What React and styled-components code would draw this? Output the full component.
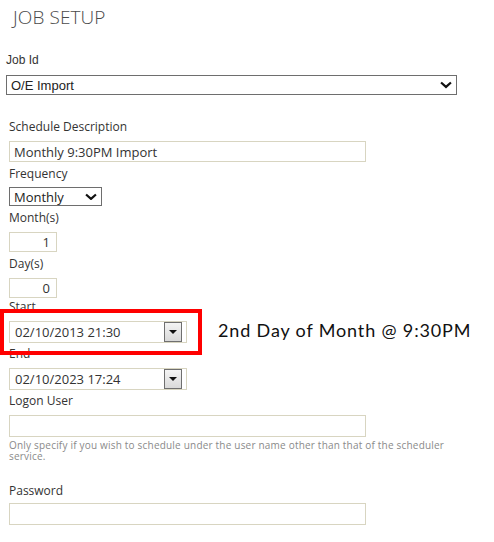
import styled, { createGlobalStyle } from "styled-components";

const GlobalStyle = createGlobalStyle`
  html, body {
    margin: 0;
    padding: 0;
    background: #ffffff;
  }
  body {
    font-family: "Open Sans", "Liberation Sans", sans-serif;
    color: #333333;
  }
`;

const Page = styled.div`
  position: relative;
  width: 494px;
  height: 542px;
  padding: 0 0 0 9px;
  box-sizing: border-box;
  overflow: hidden;
`;

const Title = styled.h1`
  margin: 0;
  padding: 5px 0 0 4px;
  font-family: "Open Sans", sans-serif;
  font-weight: 300;
  font-size: 19px;
  line-height: 24px;
  color: #4a4a4a;
  letter-spacing: 0.1px;
`;

const Field = styled.div`
  display: flex;
  flex-direction: column;
  align-items: flex-start;
  margin-top: ${(p) => p.$top || 0}px;
  margin-left: ${(p) => p.$left || 0}px;
`;

const Label = styled.label`
  display: block;
  font-family: ${(p) =>
    p.$arial ? '"Liberation Sans", Arial, sans-serif' : '"Open Sans", sans-serif'};
  font-size: 12px;
  line-height: 18px;
  color: #333333;
  margin-bottom: ${(p) => p.$gap ?? 5}px;
`;

const TextBox = styled.div`
  box-sizing: border-box;
  width: ${(p) => p.$width}px;
  height: ${(p) => p.$height || 22}px;
  border: 1px solid #d8d5c1;
  background: #ffffff;
  display: flex;
  align-items: center;
  justify-content: ${(p) => (p.$right ? "flex-end" : "flex-start")};
  padding: 0 ${(p) => (p.$right ? 6 : 4)}px 0 4px;
  font-family: "Open Sans", sans-serif;
  font-size: 13px;
  color: #333333;
  white-space: nowrap;
`;

const SelectBox = styled.div`
  box-sizing: border-box;
  width: ${(p) => p.$width}px;
  height: ${(p) => p.$height}px;
  border: 1px solid #6e6e6e;
  background: #ffffff;
  display: flex;
  align-items: center;
  justify-content: space-between;
  padding: 0 4px 0 4px;
  font-family: ${(p) =>
    p.$arial ? '"Liberation Sans", Arial, sans-serif' : '"Open Sans", sans-serif'};
  font-size: 13px;
  color: #222222;
`;

const DateBox = styled(TextBox)`
  justify-content: space-between;
  padding: 0 4px 0 5px;
`;

const DropButton = styled.span`
  box-sizing: border-box;
  width: 18px;
  height: 20px;
  border: 1px solid #6f6f6f;
  background: linear-gradient(#f4f4f4, #d9d9d9);
  display: flex;
  align-items: center;
  justify-content: center;
`;

const Triangle = styled.span`
  width: 0;
  height: 0;
  border-left: 4px solid transparent;
  border-right: 4px solid transparent;
  border-top: 4px solid #111111;
`;

const Help = styled.p`
  margin: 3px 0 0;
  width: 460px;
  font-family: "Open Sans", sans-serif;
  font-size: 10px;
  line-height: 11px;
  letter-spacing: 0.2px;
  color: #8a8a8a;
`;

const Highlight = styled.div`
  position: absolute;
  left: 0;
  top: 309px;
  width: 202px;
  height: 46px;
  box-sizing: border-box;
  border: 4px solid #ff0000;
  pointer-events: none;
`;

const Note = styled.div`
  position: absolute;
  left: 218px;
  top: 318px;
  font-family: "Lato", "Liberation Sans", sans-serif;
  font-size: 18px;
  line-height: 24px;
  letter-spacing: 0.85px;
  color: #111111;
  white-space: nowrap;
`;

const Chevron = ({ size = 12 }) => (
  <svg width={size} height={size * 0.66} viewBox="0 0 12 8">
    <path d="M1 1.5 L6 6 L11 1.5" fill="none" stroke="#111" strokeWidth="2.2" />
  </svg>
);

export default function App() {
  return (
    <>
      <GlobalStyle />
      <Page>
        <Title>JOB SETUP</Title>

        <Field $top={22} $left={-3}>
          <Label $arial $gap={6}>Job Id</Label>
          <SelectBox $arial $width={451} $height={20}>
            <span>O/E Import</span>
            <Chevron />
          </SelectBox>
        </Field>

        <Field $top={23}>
          <Label $gap={5}>Schedule Description</Label>
          <TextBox $width={357} $height={21}>Monthly 9:30PM Import</TextBox>
        </Field>

        <Field $top={3}>
          <Label $gap={4}>Frequency</Label>
          <SelectBox $width={93} $height={19}>
            <span>Monthly</span>
            <Chevron />
          </SelectBox>
        </Field>

        <Field $top={3}>
          <Label $gap={5}>Month(s)</Label>
          <TextBox $width={48} $height={20} $right>1</TextBox>
        </Field>

        <Field $top={3}>
          <Label $gap={5}>Day(s)</Label>
          <TextBox $width={48} $height={20} $right>0</TextBox>
        </Field>

        <Field $top={0}>
          <Label $gap={5}>Start</Label>
          <DateBox $width={178} $height={22}>
            <span>02/10/2013 21:30</span>
            <DropButton>
              <Triangle />
            </DropButton>
          </DateBox>
        </Field>

        <Field $top={2}>
          <Label $gap={5}>End</Label>
          <DateBox $width={178} $height={22}>
            <span>02/10/2023 17:24</span>
            <DropButton>
              <Triangle />
            </DropButton>
          </DateBox>
        </Field>

        <Field $top={2}>
          <Label $gap={5}>Logon User</Label>
          <TextBox $width={357} $height={22} />
          <Help>
            Only specify if you wish to schedule under the user name other than that of the
            scheduler service.
          </Help>
        </Field>

        <Field $top={20}>
          <Label $gap={3}>Password</Label>
          <TextBox $width={357} $height={22} />
        </Field>

        <Highlight />
        <Note>2nd Day of Month @ 9:30PM</Note>
      </Page>
    </>
  );
}
